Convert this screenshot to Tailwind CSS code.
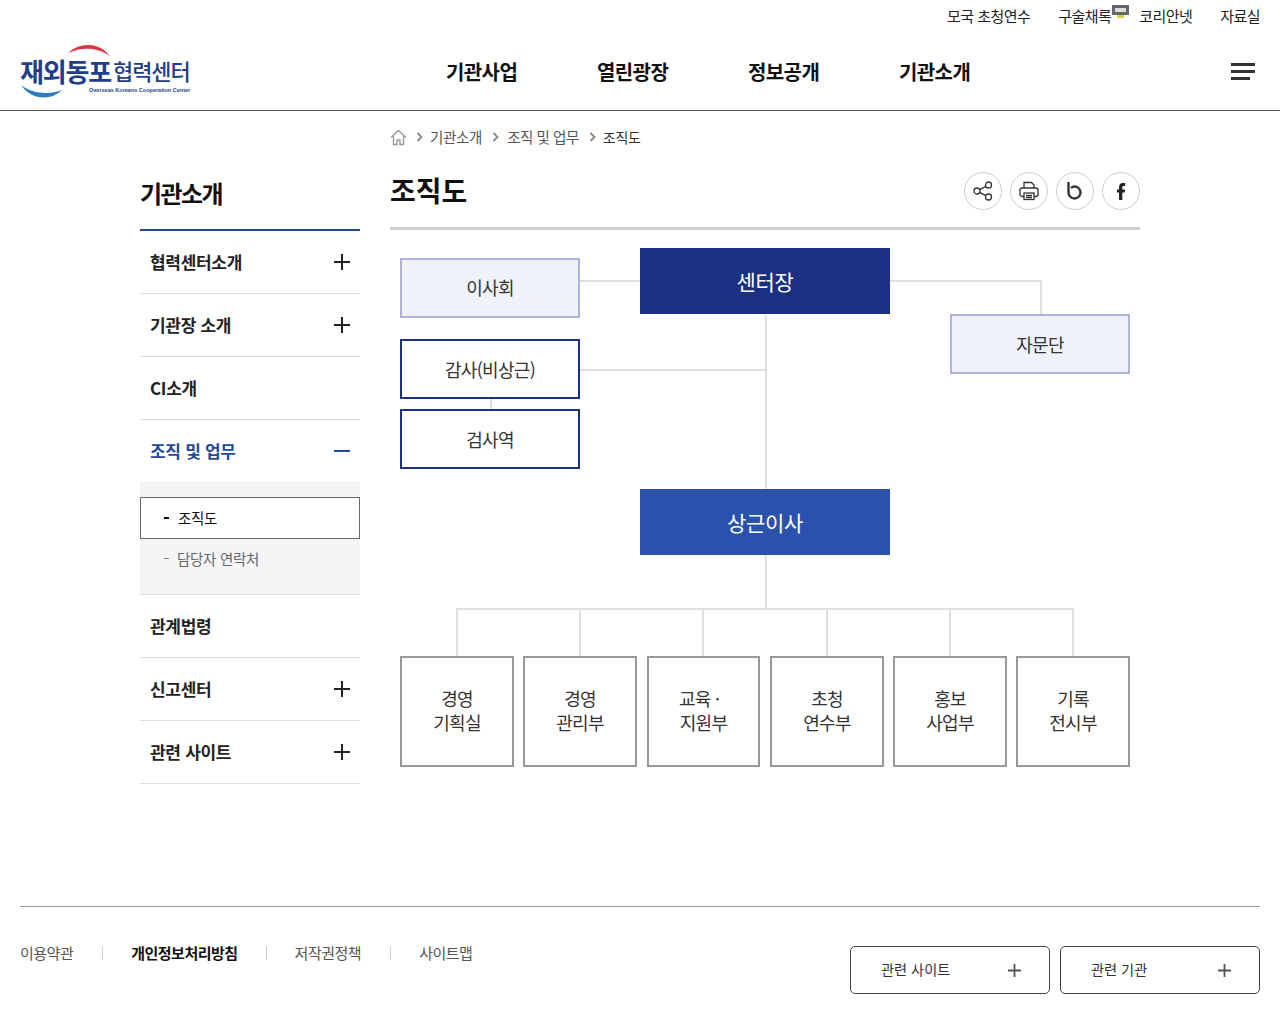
<!DOCTYPE html>
<html lang="ko">
<head>
  <meta charset="UTF-8">
  <title>조직도</title>
  <script src="https://cdn.jsdelivr.net/npm/@tailwindcss/browser@4"></script>
</head>
<body class="bg-white h-screen overflow-hidden font-['Noto_Sans_CJK_KR','Noto_Sans',sans-serif] text-[#222]">

  <!-- Top links -->
  <div class="h-[33px] flex justify-end items-center gap-7 pr-5 pb-[1px] text-[15px] tracking-[-0.55px] text-[#222]">
    <a>모국 초청연수</a>
    <a class="relative">구술채록<svg class="absolute left-[54px] top-[0px]" width="17" height="13" viewBox="0 0 17 13"><rect width="17" height="10" fill="#666"/><rect x="3" y="3" width="11" height="4" fill="#ddd"/><rect x="5" y="10" width="7" height="3" fill="#d8d040"/></svg></a>
    <a>코리안넷</a>
    <a>자료실</a>
  </div>

  <!-- Header -->
  <header class="h-[78px] border-b border-[#555] flex items-center relative">
    <div class="relative w-[171px] h-[56px] ml-5 mt-[1px] shrink-0">
      <svg class="absolute left-0 top-0" width="171" height="56" viewBox="0 0 171 56" fill="none">
        <path d="M48 9 C59 -1 78 -3 90 12 C77 3 62 3 48 9Z" fill="#dc3545"/>
        <path d="M1 41 C10 55 30 58 42 46 C30 51 12 50 1 41Z" fill="#2b7cc0"/>
      </svg>
      <div class="absolute left-0 top-[10px] text-[26px] leading-[34px] font-bold tracking-[-1.2px] text-[#1f3f8a] whitespace-nowrap">재외동포</div>
      <div class="absolute left-[93px] top-[12px] text-[22px] leading-[28px] font-medium tracking-[-1.1px] text-[#1f3f8a] whitespace-nowrap">협력센터</div>
      <div class="absolute left-[69px] top-[42px] text-[5.5px] leading-[8px] font-bold text-[#1f3f8a] whitespace-nowrap font-['Liberation_Sans',sans-serif]">Overseas Koreans Cooperation Center</div>
    </div>
    <nav class="absolute left-[446px] top-[21px] flex gap-[79px] text-xl leading-[36px] font-bold tracking-[-0.6px] text-[#111]">
      <a class="w-[72px] whitespace-nowrap">기관사업</a>
      <a class="w-[72px] whitespace-nowrap">열린광장</a>
      <a class="w-[72px] whitespace-nowrap">정보공개</a>
      <a class="w-[72px] whitespace-nowrap">기관소개</a>
    </nav>
    <button class="absolute right-[25px] top-[30px] flex flex-col gap-[4px] items-start">
      <span class="block w-6 h-[3px] bg-[#333]"></span>
      <span class="block w-6 h-[3px] bg-[#333]"></span>
      <span class="block w-[19px] h-[3px] bg-[#333]"></span>
    </button>
  </header>

  <div class="flex pl-[140px] w-[1140px] h-[795px]">
    <!-- Sidebar -->
    <aside class="w-[220px] shrink-0 mr-[30px]">
      <h2 class="h-[120px] pt-[64px] text-2xl leading-[36px] font-bold tracking-[-1.6px] text-[#111] border-b-2 border-[#1f4a9c]">기관소개</h2>
      <ul class="text-[17px] font-bold tracking-[-0.3px] text-[#222]">
        <li class="h-[63px] pl-[10px] pr-[9px] flex items-center justify-between border-b border-[#ddd]">
          협력센터소개
          <svg width="18" height="18" viewBox="0 0 18 18" stroke="#222" stroke-width="2"><path d="M1 9h16M9 1v16"/></svg>
        </li>
        <li class="h-[63px] pl-[10px] pr-[9px] flex items-center justify-between border-b border-[#ddd]">
          기관장 소개
          <svg width="18" height="18" viewBox="0 0 18 18" stroke="#222" stroke-width="2"><path d="M1 9h16M9 1v16"/></svg>
        </li>
        <li class="h-[63px] px-[10px] flex items-center border-b border-[#ddd]">CI소개</li>
        <li class="h-[62px] pl-[10px] pr-[9px] flex items-center justify-between text-[#1f4a9c]">
          조직 및 업무
          <svg width="18" height="18" viewBox="0 0 18 18" stroke="#1f4a9c" stroke-width="2"><path d="M1 9h16"/></svg>
        </li>
        <li class="h-[113px] bg-[#f5f5f5] pt-[15px] border-b border-[#ddd] font-normal text-[14.5px]">
          <div class="h-[42px] bg-white border border-[#666] flex items-center pl-[23px] pb-[1px] text-[#111] gap-[9px]">
            <span class="w-[5px] h-[2px] bg-[#111]"></span>조직도
          </div>
          <div class="h-[39px] flex items-center pl-[24px] gap-[8px] text-[#666]">
            <span class="w-[5px] h-[1px] bg-[#888]"></span>담당자 연락처
          </div>
        </li>
        <li class="h-[63px] px-[10px] flex items-center border-b border-[#ddd]">관계법령</li>
        <li class="h-[63px] pl-[10px] pr-[9px] flex items-center justify-between border-b border-[#ddd]">
          신고센터
          <svg width="18" height="18" viewBox="0 0 18 18" stroke="#222" stroke-width="2"><path d="M1 9h16M9 1v16"/></svg>
        </li>
        <li class="h-[63px] pl-[10px] pr-[9px] flex items-center justify-between border-b border-[#ddd]">
          관련 사이트
          <svg width="18" height="18" viewBox="0 0 18 18" stroke="#222" stroke-width="2"><path d="M1 9h16M9 1v16"/></svg>
        </li>
      </ul>
    </aside>

    <!-- Main -->
    <main class="w-[750px] shrink-0">
      <div class="h-[52px] flex items-center text-[14.5px] tracking-[-0.3px] text-[#555]">
        <svg width="17" height="17" viewBox="0 0 17 17" fill="none" stroke="#999" stroke-width="1.400"><path d="M1 8.500 8.500 1.500 16 8.500M3.500 7v8.500H7V11h3v4.500h3.500V7"/></svg>
        <svg class="ml-[9px] mr-[7px]" width="7" height="10" viewBox="0 0 7 10" fill="none" stroke="#888" stroke-width="1.800"><path d="M1.500 1l4 4-4 4"/></svg>
        <span>기관소개</span>
        <svg class="ml-[10px] mr-[8px]" width="7" height="10" viewBox="0 0 7 10" fill="none" stroke="#888" stroke-width="1.800"><path d="M1.500 1l4 4-4 4"/></svg>
        <span class="tracking-[-0.45px]">조직 및 업무</span>
        <svg class="ml-[10px] mr-[7px]" width="7" height="10" viewBox="0 0 7 10" fill="none" stroke="#888" stroke-width="1.800"><path d="M1.500 1l4 4-4 4"/></svg>
        <span class="text-sm text-[#333]">조직도</span>
      </div>

      <div class="h-[67px] border-b-[3px] border-[#ccc] flex justify-between items-start">
        <h1 class="text-[28px] leading-[54px] font-bold tracking-[0px] text-[#111]">조직도</h1>
        <div class="flex gap-2 pt-[9px]">
          <span class="w-[38px] h-[38px] rounded-full border border-[#ccc] flex items-center justify-center">
            <svg width="20" height="20" viewBox="0 0 20 20" fill="none" stroke="#333" stroke-width="1.300"><circle cx="4" cy="10" r="3"/><circle cx="15.500" cy="4" r="3"/><circle cx="15.500" cy="16" r="3"/><path d="M6.700 8.600 12.800 5.400M6.700 11.400 12.800 14.600"/></svg>
          </span>
          <span class="w-[38px] h-[38px] rounded-full border border-[#ccc] flex items-center justify-center">
            <svg width="20" height="20" viewBox="0 0 20 20" fill="none" stroke="#333" stroke-width="1.300"><path d="M5 7V1.500h7.500L15 4v3"/><rect x="1" y="7" width="18" height="8.500" rx="2"/><rect x="5" y="12" width="10" height="6.500" fill="#fff"/><path d="M7 14.500h6M7 16.500h6"/></svg>
          </span>
          <span class="w-[38px] h-[38px] rounded-full border border-[#ccc] flex items-center justify-center">
            <svg width="16" height="18" viewBox="0 0 16 18" fill="none" stroke="#333" stroke-width="2.400"><path d="M1.500 0v10.500a6 6 0 1 0 6-6c-1.500 0-2.500.5-3.500 1.500"/></svg>
          </span>
          <span class="w-[38px] h-[38px] rounded-full border border-[#ccc] flex items-center justify-center">
            <svg width="9" height="17" viewBox="0 0 11 18" preserveAspectRatio="none" fill="#222"><path d="M2.500 18V10H0V6.800H2.500V4.500C2.500 1.600 4.300 0 7 0c1.200 0 2.500.1 3 .2V3.300H8.300C6.900 3.300 6.500 4 6.500 5V6.800H9.900L9.400 10H6.500v8Z"/></svg>
          </span>
        </div>
      </div>

      <!-- Org chart: boxes and connector lines sit on a free canvas -->
      <div class="relative h-[560px] text-lg text-[#333] tracking-[-0.7px]">
        <!-- connectors -->
        <div class="absolute left-[190px] top-[50px] w-[60px] h-[2px] bg-[#e0e0e0]"></div>
        <div class="absolute left-[375px] top-[85px] w-[2px] h-[175px] bg-[#e0e0e0]"></div>
        <div class="absolute left-[190px] top-[139px] w-[186px] h-[2px] bg-[#e0e0e0]"></div>
        <div class="absolute left-[100px] top-[168px] w-[2px] h-[12px] bg-[#e0e0e0]"></div>
        <div class="absolute left-[500px] top-[50px] w-[152px] h-[34px] border-t-2 border-r-2 border-[#e0e0e0]"></div>
        <div class="absolute left-[375px] top-[325px] w-[2px] h-[54px] bg-[#e0e0e0]"></div>
        <div class="absolute left-[66px] top-[378px] w-[618px] h-[48px] border-t-2 border-x-2 border-[#e0e0e0]"></div>
        <div class="absolute left-[189px] top-[378px] w-[2px] h-[48px] bg-[#e0e0e0]"></div>
        <div class="absolute left-[312px] top-[378px] w-[2px] h-[48px] bg-[#e0e0e0]"></div>
        <div class="absolute left-[436px] top-[378px] w-[2px] h-[48px] bg-[#e0e0e0]"></div>
        <div class="absolute left-[559px] top-[378px] w-[2px] h-[48px] bg-[#e0e0e0]"></div>

        <!-- boxes -->
        <div class="absolute left-[10px] top-[28px] w-[180px] h-[60px] border-2 border-[#aeb4d9] bg-[#eff2f9] pb-[2px] flex items-center justify-center">이사회</div>
        <div class="absolute left-[250px] top-[18px] w-[250px] h-[66px] bg-[#1b2f83] text-white text-[21px] tracking-[-0.3px] flex items-center justify-center">센터장</div>
        <div class="absolute left-[560px] top-[84px] w-[180px] h-[60px] border-2 border-[#aeb4d9] bg-[#eff2f9] flex items-center justify-center">자문단</div>
        <div class="absolute left-[10px] top-[109px] w-[180px] h-[60px] border-2 border-[#1b2f83] bg-white flex items-center justify-center">감사(비상근)</div>
        <div class="absolute left-[10px] top-[179px] w-[180px] h-[60px] border-2 border-[#1b2f83] bg-white pb-[1px] flex items-center justify-center">검사역</div>
        <div class="absolute left-[250px] top-[259px] w-[250px] h-[66px] bg-[#2a52ad] text-white text-[21px] tracking-[-0.3px] flex items-center justify-center">상근이사</div>

        <div class="absolute left-[10px] top-[426px] w-[114px] h-[111px] border-2 border-[#999] bg-white pb-[3px] flex items-center justify-center text-center leading-[24px]">경영<br>기획실</div>
        <div class="absolute left-[133px] top-[426px] w-[114px] h-[111px] border-2 border-[#999] bg-white pb-[3px] flex items-center justify-center text-center leading-[24px]">경영<br>관리부</div>
        <div class="absolute left-[257px] top-[426px] w-[113px] h-[111px] border-2 border-[#999] bg-white pb-[3px] flex items-center justify-center text-center leading-[24px]">교육 ·&nbsp;&nbsp;<br>지원부</div>
        <div class="absolute left-[380px] top-[426px] w-[114px] h-[111px] border-2 border-[#999] bg-white pb-[3px] flex items-center justify-center text-center leading-[24px]">초청<br>연수부</div>
        <div class="absolute left-[503px] top-[426px] w-[114px] h-[111px] border-2 border-[#999] bg-white pb-[3px] flex items-center justify-center text-center leading-[24px]">홍보<br>사업부</div>
        <div class="absolute left-[626px] top-[426px] w-[114px] h-[111px] border-2 border-[#999] bg-white pb-[3px] flex items-center justify-center text-center leading-[24px]">기록<br>전시부</div>
      </div>
    </main>
  </div>

  <!-- Footer -->
  <footer class="mx-5 border-t border-[#999] flex justify-between pt-[39px]">
    <ul class="flex items-start text-[15px] leading-[16px] -mt-px tracking-[-0.5px] text-[#555]">
      <li>이용약관</li>
      <li class="w-px h-[14px] bg-[#ccc] ml-[29px] mr-[28px] mt-[1px]"></li>
      <li class="font-bold text-[#111]">개인정보처리방침</li>
      <li class="w-px h-[14px] bg-[#ccc] mx-[28px] mt-[1px]"></li>
      <li>저작권정책</li>
      <li class="w-px h-[14px] bg-[#ccc] ml-[29px] mr-[28px] mt-[1px]"></li>
      <li>사이트맵</li>
    </ul>
    <div class="flex gap-[10px]">
      <button class="w-[200px] h-[48px] border border-[#444] rounded-[5px] flex items-center justify-between pl-[30px] pr-[28px] text-[14.2px] text-[#333]">
        관련 사이트
        <svg width="13" height="13" viewBox="0 0 13 13" stroke="#555" stroke-width="1.800"><path d="M0 6.500h13M6.500 0v13"/></svg>
      </button>
      <button class="w-[200px] h-[48px] border border-[#444] rounded-[5px] flex items-center justify-between pl-[30px] pr-[28px] text-[14.2px] text-[#333]">
        관련 기관
        <svg width="13" height="13" viewBox="0 0 13 13" stroke="#555" stroke-width="1.800"><path d="M0 6.500h13M6.500 0v13"/></svg>
      </button>
    </div>
  </footer>
</body>
</html>
